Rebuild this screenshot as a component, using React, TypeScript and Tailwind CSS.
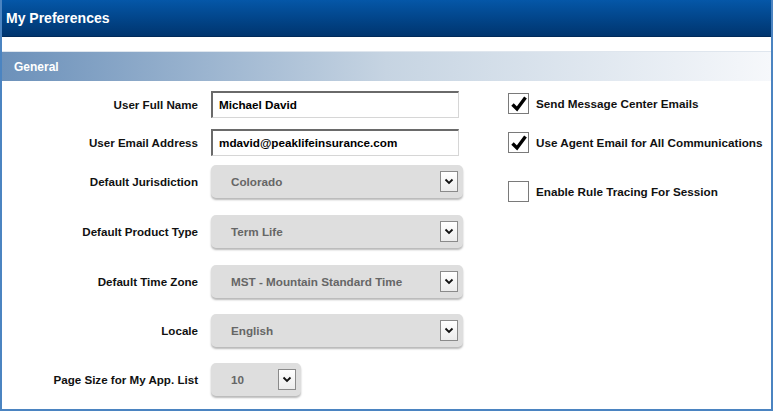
import { ReactNode } from 'react'

const Chevron = () => (
  <div className="flex items-center justify-center w-[18px] h-[21px] border border-[#8a8a8a] bg-gradient-to-b from-white to-[#ececec]">
    <svg width="10" height="7" viewBox="0 0 10 7">
      <path d="M1.5 1.5 L5 5 L8.5 1.5" fill="none" stroke="#111" strokeWidth="1.8" />
    </svg>
  </div>
)

const Select = ({ value, width = 'w-[252px]' }: { value: string; width?: string }) => (
  <div className={`${width} h-[33px] flex items-center justify-between pl-[20px] pr-[5px] rounded-[5px] bg-[#dedede] shadow-[0_2px_2px_rgba(0,0,0,0.28)]`}>
    <span className="text-[11.7px] font-bold text-[#666]">{value}</span>
    <Chevron />
  </div>
)

const TextInput = ({ value }: { value: string }) => (
  <div className="w-[248px] h-[27px] flex items-center pl-[6px] bg-white border border-[#d6d6d6] border-t-2 border-l-2 border-t-[#6a6a6a] border-l-[#6a6a6a]">
    <span className="text-[11.7px] font-bold text-black">{value}</span>
  </div>
)

const Row = ({ label, children, className = '' }: { label: string; children: ReactNode; className?: string }) => (
  <div className={`flex items-center gap-[13px] ${className}`}>
    <div className="w-[196px] text-right text-[11.6px] font-bold text-[#111]">{label}</div>
    {children}
  </div>
)

const Check = ({ label, checked, className = '' }: { label: string; checked: boolean; className?: string }) => (
  <div className={`flex items-center gap-[7px] ${className}`}>
    <div className="relative w-[21px] h-[21px] bg-white border border-[#7a7a7a]">
      {checked && (
        <svg className="absolute left-[1px] top-[1px]" width="18" height="18" viewBox="0 0 18 18">
          <path d="M2.5 9.5 L7 14 L15.5 2.5" fill="none" stroke="#000" strokeWidth="3.4" strokeLinejoin="miter" />
        </svg>
      )}
    </div>
    <span className="text-[11.7px] font-bold text-[#111]">{label}</span>
  </div>
)

export default function App() {
  return (
    <div className="w-[773px] h-[411px] bg-white border-2 border-t-0 border-[#4b84c1] overflow-hidden" style={{ fontFamily: '"Liberation Sans", Arial, sans-serif' }}>
      {/* Encabezado */}
      <div className="h-[37px] flex items-center px-[4px] bg-gradient-to-b from-[#0557a8] to-[#00356f] border-b border-[#002a5a]">
        <h1 className="text-[14px] font-bold text-white">My Preferences</h1>
      </div>

      <div className="pt-[14px]">
        <div className="h-[30px] flex items-center pl-[12px] border-t border-[#dfe6ee] bg-gradient-to-r from-[#6c91ba] via-[#c6d4e2] to-[#f6f8fb]">
          <span className="text-[12px] font-bold text-white">General</span>
        </div>
      </div>

      <div className="flex">
        <div className="w-[461px] flex flex-col pt-[10px]">
          <Row label="User Full Name">
            <TextInput value="Michael David" />
          </Row>
          <Row label="User Email Address" className="mt-[11px]">
            <TextInput value="mdavid@peaklifeinsurance.com" />
          </Row>
          <Row label="Default Jurisdiction" className="mt-[9px]">
            <Select value="Colorado" />
          </Row>
          <Row label="Default Product Type" className="mt-[17px]">
            <Select value="Term Life" />
          </Row>
          <Row label="Default Time Zone" className="mt-[17px]">
            <Select value="MST - Mountain Standard Time" />
          </Row>
          <Row label="Locale" className="mt-[16px]">
            <Select value="English" />
          </Row>
          <Row label="Page Size for My App. List" className="mt-[16px]">
            <Select value="10" width="w-[90px]" />
          </Row>
        </div>

        <div className="ml-[45px] flex flex-col pt-[12px]">
          <Check label="Send Message Center Emails" checked />
          <Check label="Use Agent Email for All Communications" checked className="mt-[18px]" />
          <Check label="Enable Rule Tracing For Session" checked={false} className="mt-[28px]" />
        </div>
      </div>
    </div>
  )
}
